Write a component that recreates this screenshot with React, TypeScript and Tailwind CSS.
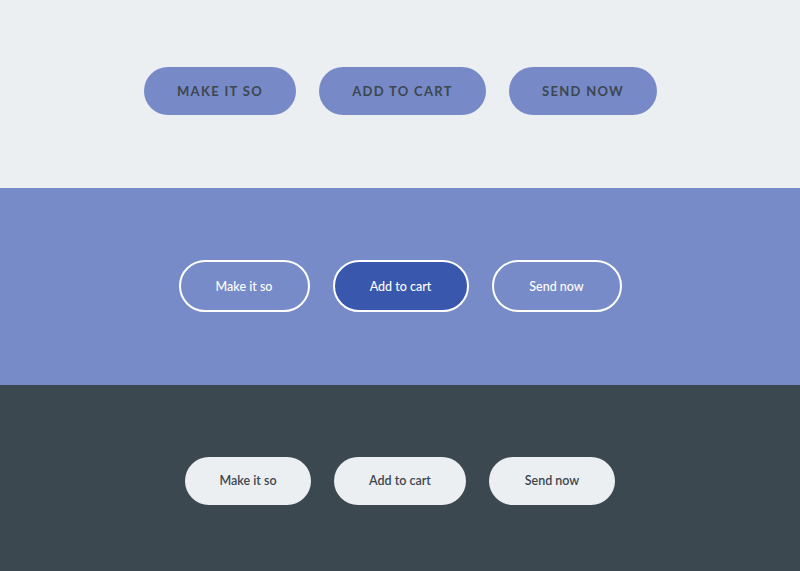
import React from "react";

const font = { fontFamily: "Lato, 'Noto Sans', 'Liberation Sans', sans-serif" };

export default function App() {
  return (
    <div className="w-[800px] h-[571px] flex flex-col" style={font}>
      <section className="h-[188px] bg-[#eceff1] flex justify-center items-start pt-[67px] gap-[23px]">
        <button className="w-[152px] h-[48px] pt-[2px] pl-[1px] rounded-full bg-[#7789c7] text-[#3c4750] text-[13px] font-bold tracking-[1.3px] uppercase">
          Make it so
        </button>
        <button className="w-[167px] h-[48px] pt-[2px] pl-[1px] rounded-full bg-[#7789c7] text-[#3c4750] text-[13px] font-bold tracking-[1.3px] uppercase">
          Add to cart
        </button>
        <button className="w-[148px] h-[48px] pt-[2px] pl-[1px] rounded-full bg-[#7789c7] text-[#3c4750] text-[13px] font-bold tracking-[1.3px] uppercase">
          Send now
        </button>
      </section>
      <section className="h-[197px] bg-[#778bc8] flex justify-center items-start pt-[72px] gap-[23px]">
        <button className="w-[131px] h-[52px] pt-[2px] rounded-full border-[2.5px] border-white text-white text-[12.5px] font-medium">
          Make it so
        </button>
        <button className="w-[136px] h-[52px] pt-[2px] rounded-full border-[2.5px] border-white bg-[#3a57ae] text-white text-[12.5px] font-medium">
          Add to cart
        </button>
        <button className="w-[130px] h-[52px] pt-[2px] rounded-full border-[2.5px] border-white text-white text-[12.5px] font-medium">
          Send now
        </button>
      </section>
      <section className="h-[186px] bg-[#3c4850] flex justify-center items-start pt-[72px] gap-[23px]">
        <button className="w-[126px] h-[48px] pt-[1px] rounded-full bg-[#eceff1] text-[#3c4750] text-[12.5px] font-semibold">
          Make it so
        </button>
        <button className="w-[132px] h-[48px] pt-[1px] rounded-full bg-[#eceff1] text-[#3c4750] text-[12.5px] font-semibold">
          Add to cart
        </button>
        <button className="w-[126px] h-[48px] pt-[1px] rounded-full bg-[#eceff1] text-[#3c4750] text-[12.5px] font-semibold">
          Send now
        </button>
      </section>
    </div>
  );
}
